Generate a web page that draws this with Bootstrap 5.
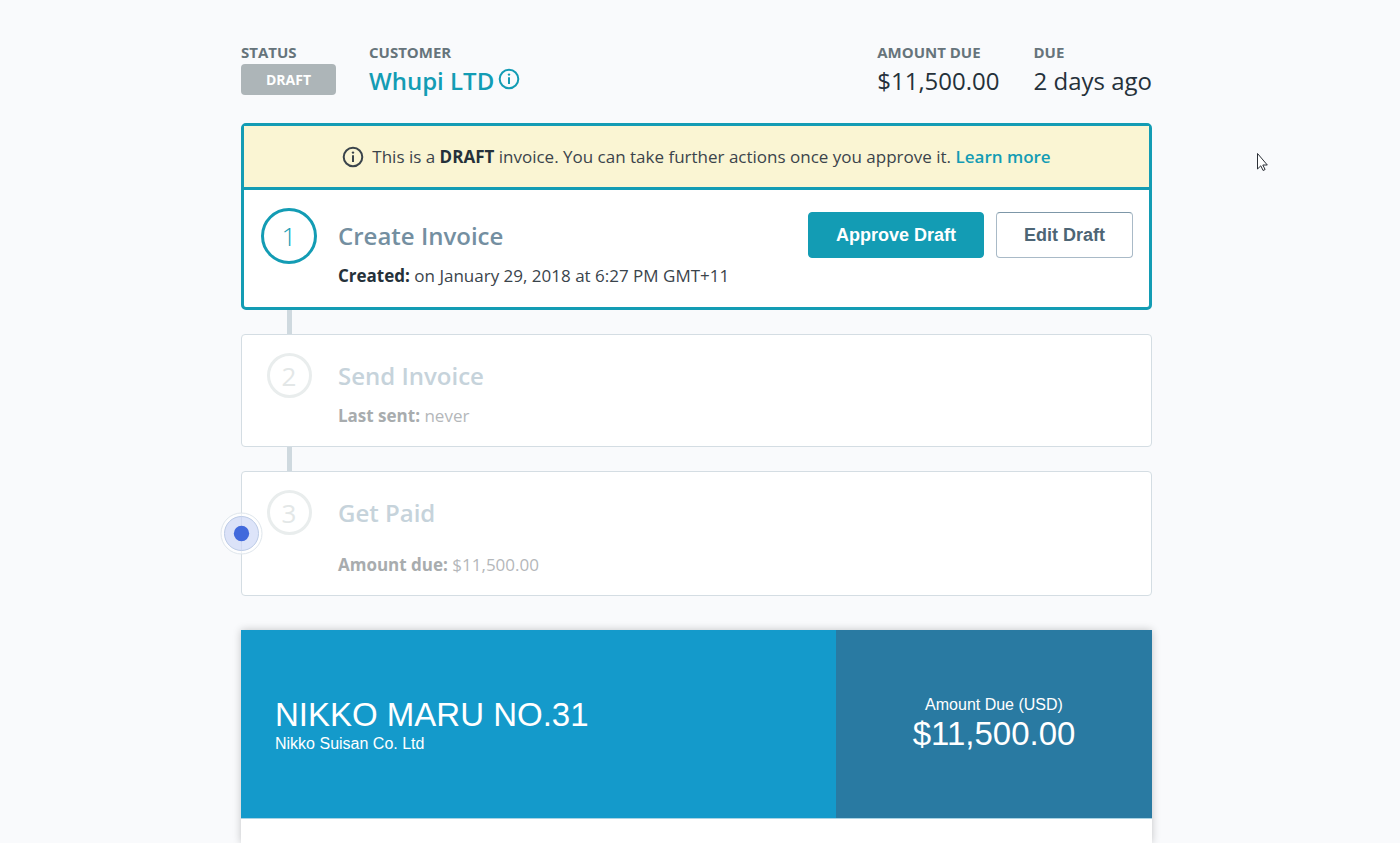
<!DOCTYPE html>
<html lang="en">
<head>
<meta charset="utf-8">
<meta name="viewport" content="width=device-width, initial-scale=1">
<title>Invoice</title>
<link href="https://cdn.jsdelivr.net/npm/bootstrap@5.3.0/dist/css/bootstrap.min.css" rel="stylesheet">
<style>
:root { --teal: #139cb4; --line: #d4dde3; }
body { background: #f9fafc; color: #25313a; font-family: "Open Sans", "Noto Sans", sans-serif; font-size: 17px; line-height: 24px; }
.page-wrap { padding: 40px 19px 0 12px; }
.invoice-page { max-width: 911px; }
.caption { font-size: 15px; font-weight: 700; color: #66747b; line-height: 24px; }
.fact { font-size: 24px; line-height: 34px; }
.customer-link, .learn-link { color: var(--teal); font-weight: 600; text-decoration: none; }
.customer-link { font-size: 24px; line-height: 34px; }
.status-pill { background: #adb5b8; color: #fff; font-size: 14px; font-weight: 700; line-height: 31px; width: 95px; border-radius: 4px; text-align: center; }
.facts { padding-bottom: 25px; }
.col-status { width: 128px; }
.gap-facts { gap: 34px; }
.step { background: #fff; border: 1px solid var(--line); border-radius: 4px; position: relative; }
.step-active { border: 3px solid var(--teal); border-radius: 5px; }
.banner { background: #faf5d3; border-bottom: 3px solid var(--teal); min-height: 64px; gap: 8px; color: #3a444b; }
.banner b { color: #25313a; }
.link-line { width: 5px; height: 24px; background: #cfd9df; margin-left: 46px; }
.num-col { flex: 0 0 94px; }
.step-active .num-col { flex-basis: 90px; }
.num { width: 45px; height: 45px; border: 3px solid #e9eded; border-radius: 50%; color: #e3e7e7; font-size: 26px; font-weight: 400; line-height: 1; }
.step-active .num { width: 56px; height: 56px; border-color: var(--teal); color: var(--teal); font-weight: 300; }
.step-title { font-size: 24px; font-weight: 600; line-height: 32px; color: #748fa1; margin: 0; }
.step-note { margin: 0; color: #3a444b; }
.step-note b { color: #25313a; }
.step-idle .step-title { color: #c6d3db; }
.step-idle .step-note { color: #b4b7ba; }
.step-idle .step-note b { color: #a8acae; }
.pad-one { padding: 18px 16px 17px 0; min-height: 117px; }
.pad-two { padding-top: 18px; min-height: 111px; }
.pad-three { padding-top: 18px; min-height: 123px; }
.body-col { padding: 7px 0 0 2px; }
.step-active .body-col { padding: 12px 0 0 4px; }
.note-near { margin-top: 12px; }
.note-far { margin-top: 24px; }
.actions { gap: 12px; }
.act { font-family: "Liberation Sans", Arial, sans-serif; font-size: 18px; font-weight: 700; line-height: 24px; padding: 10px 27px; border-radius: 4px; }
.act-main { --bs-btn-bg: var(--teal); --bs-btn-border-color: var(--teal); --bs-btn-color: #fff; --bs-btn-hover-bg: #0f8ca2; --bs-btn-hover-color: #fff; }
.act-edit { --bs-btn-bg: #fff; --bs-btn-border-color: #a9bac7; --bs-btn-color: #4d6575; --bs-btn-hover-bg: #f0f4f5; border-top-color: #7d97a8; }
.beacon { position: absolute; left: -22px; top: 40px; width: 43px; height: 43px; }
.paper { margin-top: 34px; background: #fff; box-shadow: 0 0 8px rgba(0,0,0,.22); font-family: "Liberation Sans", Arial, sans-serif; color: #fff; }
.paper-head { min-height: 189px; border-bottom: 1px solid #a9d3e4; }
.paper-left { background: #149acb; padding: 4px 34px 0; }
.paper-right { background: #297aa2; flex: 0 0 316px; padding-bottom: 2px; }
.big { font-size: 33px; line-height: 36px; margin: 0; font-weight: 400; }
.small-line { font-size: 16px; line-height: 22px; }
.pointer { position: absolute; left: 1256px; top: 152px; }
</style>
</head>
<body>
<svg class="d-none" aria-hidden="true">
  <symbol id="info" viewBox="0 0 22 22"><circle cx="11" cy="11" r="9.3" fill="none" stroke="currentColor" stroke-width="2"/><path d="M11 9.2V16" stroke="currentColor" stroke-width="2"/><circle cx="11" cy="6.600" r="1.200" fill="currentColor"/></symbol>
</svg>
<div class="page-wrap min-vh-100 d-flex flex-column">
<main class="invoice-page w-100 mx-auto flex-grow-1 d-flex flex-column">
  <header class="facts d-flex justify-content-between">
    <div class="d-flex">
      <div class="col-status">
        <div class="caption">STATUS</div>
        <div class="status-pill">DRAFT</div>
      </div>
      <div>
        <div class="caption">CUSTOMER</div>
        <a href="#" class="customer-link d-flex gap-1">Whupi LTD
          <svg class="mt-1" width="22" height="22" aria-hidden="true"><use href="#info"/></svg>
        </a>
      </div>
    </div>
    <div class="d-flex gap-facts">
      <div><div class="caption">AMOUNT DUE</div><div class="fact">$11,500.00</div></div>
      <div><div class="caption">DUE</div><div class="fact">2 days ago</div></div>
    </div>
  </header>

  <section class="step step-active">
    <div class="banner d-flex align-items-center justify-content-center">
      <svg width="22" height="22" aria-hidden="true"><use href="#info"/></svg>
      <span>This is a <b>DRAFT</b> invoice. You can take further actions once you approve it. <a href="#" class="learn-link">Learn more</a></span>
    </div>
    <div class="pad-one d-flex align-items-start">
      <div class="num-col d-flex justify-content-center"><div class="num d-flex align-items-center justify-content-center">1</div></div>
      <div class="body-col flex-grow-1">
        <h2 class="step-title">Create Invoice</h2>
        <p class="step-note note-near"><b>Created:</b> on January 29, 2018 at 6:27 PM GMT+11</p>
      </div>
      <div class="actions d-flex pt-1">
        <button type="button" class="btn act act-main">Approve Draft</button>
        <button type="button" class="btn act act-edit">Edit Draft</button>
      </div>
    </div>
  </section>
  <div class="link-line"></div>
  <section class="step step-idle">
    <div class="pad-two d-flex align-items-start">
      <div class="num-col d-flex justify-content-center"><div class="num d-flex align-items-center justify-content-center">2</div></div>
      <div class="body-col">
        <h2 class="step-title">Send Invoice</h2>
        <p class="step-note note-near"><b>Last sent:</b> never</p>
      </div>
    </div>
  </section>
  <div class="link-line"></div>
  <section class="step step-idle">
    <div class="pad-three d-flex align-items-start">
      <div class="num-col d-flex justify-content-center"><div class="num d-flex align-items-center justify-content-center">3</div></div>
      <div class="body-col">
        <h2 class="step-title">Get Paid</h2>
        <p class="step-note note-far"><b>Amount due:</b> $11,500.00</p>
      </div>
    </div>
    <svg class="beacon" viewBox="0 0 43 43" aria-hidden="true"><circle cx="21.500" cy="21.500" r="20.500" fill="#fff" fill-opacity=".6" stroke="#dfe6ec"/><circle cx="21.500" cy="21.500" r="17" fill="#4169dc" fill-opacity=".18" stroke="#bccbe6"/><circle cx="21.500" cy="21.500" r="7.700" fill="#4169dc"/></svg>
  </section>

  <section class="paper flex-grow-1">
    <div class="paper-head d-flex">
      <div class="paper-left flex-grow-1 d-flex flex-column justify-content-center">
        <h1 class="big">NIKKO MARU NO.31</h1>
        <div class="small-line">Nikko Suisan Co. Ltd</div>
      </div>
      <div class="paper-right d-flex flex-column justify-content-center text-center">
        <div class="small-line">Amount Due (USD)</div>
        <div class="big">$11,500.00</div>
      </div>
    </div>
  </section>
</main>
</div>
<svg class="pointer" width="13" height="20" viewBox="0 0 13 20" aria-hidden="true"><path d="M1.500 1.500V17l3.300-3.200 2.300 4.700 2-1-2.300-4.500h4.500z" fill="#fff" stroke="#2b2f36" stroke-width="1"/></svg>
<script src="https://cdn.jsdelivr.net/npm/bootstrap@5.3.0/dist/js/bootstrap.bundle.min.js"></script>
</body>
</html>
